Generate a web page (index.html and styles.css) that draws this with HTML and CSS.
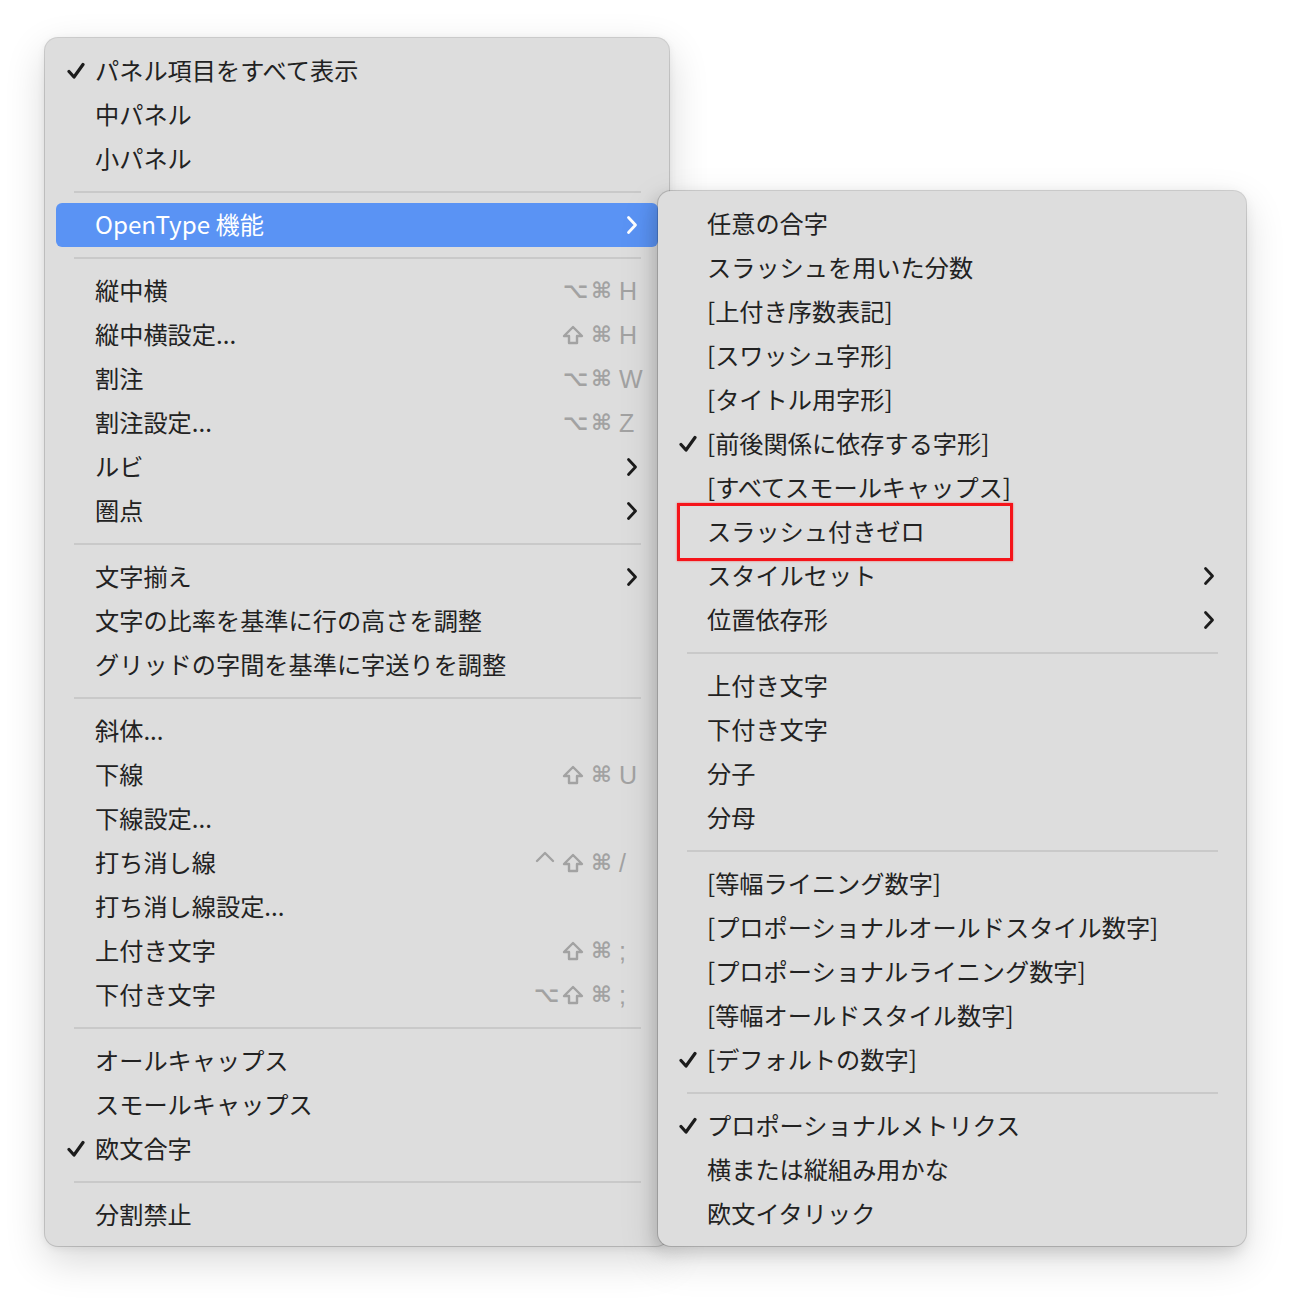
FILE: index.html
```html
<!DOCTYPE html>
<html lang="ja">
<head>
<meta charset="utf-8">
<link rel="stylesheet" href="styles.css">
</head>
<body>
<div class="stage">
  <div class="menu main">
    <div class="item"><span class="check"><svg viewBox="0 0 18 18"><path d="M2 9.5 L7 15 L16 2.5"/></svg></span><span class="label">パネル項目をすべて表示</span></div>
    <div class="item"><span class="check"></span><span class="label">中パネル</span></div>
    <div class="item"><span class="check"></span><span class="label">小パネル</span></div>
    <div class="sep"></div>
    <div class="item active"><span class="check"></span><span class="label">OpenType 機能</span><span class="chev"><svg viewBox="0 0 12 20"><path d="M2.5 2.5 L9.5 10 L2.5 17.5"/></svg></span></div>
    <div class="sep"></div>
    <div class="item"><span class="check"></span><span class="label">縦中横</span><span class="keys"><span class="k">⌥</span><span class="k">⌘</span><span class="l">H</span></span></div>
    <div class="item"><span class="check"></span><span class="label">縦中横設定...</span><span class="keys"><svg class="shift" viewBox="0 0 22 20"><path d="M11 2 L20 11 L15 11 L15 18 L7 18 L7 11 L2 11 Z"/></svg><span class="k">⌘</span><span class="l">H</span></span></div>
    <div class="item"><span class="check"></span><span class="label">割注</span><span class="keys"><span class="k">⌥</span><span class="k">⌘</span><span class="l">W</span></span></div>
    <div class="item"><span class="check"></span><span class="label">割注設定...</span><span class="keys"><span class="k">⌥</span><span class="k">⌘</span><span class="l">Z</span></span></div>
    <div class="item"><span class="check"></span><span class="label">ルビ</span><span class="chev"><svg viewBox="0 0 12 20"><path d="M2.5 2.5 L9.5 10 L2.5 17.5"/></svg></span></div>
    <div class="item"><span class="check"></span><span class="label">圏点</span><span class="chev"><svg viewBox="0 0 12 20"><path d="M2.5 2.5 L9.5 10 L2.5 17.5"/></svg></span></div>
    <div class="sep"></div>
    <div class="item"><span class="check"></span><span class="label">文字揃え</span><span class="chev"><svg viewBox="0 0 12 20"><path d="M2.5 2.5 L9.5 10 L2.5 17.5"/></svg></span></div>
    <div class="item"><span class="check"></span><span class="label">文字の比率を基準に行の高さを調整</span></div>
    <div class="item"><span class="check"></span><span class="label">グリッドの字間を基準に字送りを調整</span></div>
    <div class="sep"></div>
    <div class="item"><span class="check"></span><span class="label">斜体...</span></div>
    <div class="item"><span class="check"></span><span class="label">下線</span><span class="keys"><svg class="shift" viewBox="0 0 22 20"><path d="M11 2 L20 11 L15 11 L15 18 L7 18 L7 11 L2 11 Z"/></svg><span class="k">⌘</span><span class="l">U</span></span></div>
    <div class="item"><span class="check"></span><span class="label">下線設定...</span></div>
    <div class="item"><span class="check"></span><span class="label">打ち消し線</span><span class="keys"><svg class="ctrl" viewBox="0 0 20 20"><path d="M2 12 L10 4 L18 12"/></svg><svg class="shift" viewBox="0 0 22 20"><path d="M11 2 L20 11 L15 11 L15 18 L7 18 L7 11 L2 11 Z"/></svg><span class="k">⌘</span><span class="l">/</span></span></div>
    <div class="item"><span class="check"></span><span class="label">打ち消し線設定...</span></div>
    <div class="item"><span class="check"></span><span class="label">上付き文字</span><span class="keys"><svg class="shift" viewBox="0 0 22 20"><path d="M11 2 L20 11 L15 11 L15 18 L7 18 L7 11 L2 11 Z"/></svg><span class="k">⌘</span><span class="l">;</span></span></div>
    <div class="item"><span class="check"></span><span class="label">下付き文字</span><span class="keys"><span class="k">⌥</span><svg class="shift" viewBox="0 0 22 20"><path d="M11 2 L20 11 L15 11 L15 18 L7 18 L7 11 L2 11 Z"/></svg><span class="k">⌘</span><span class="l">;</span></span></div>
    <div class="sep"></div>
    <div class="item"><span class="check"></span><span class="label">オールキャップス</span></div>
    <div class="item"><span class="check"></span><span class="label">スモールキャップス</span></div>
    <div class="item"><span class="check"><svg viewBox="0 0 18 18"><path d="M2 9.5 L7 15 L16 2.5"/></svg></span><span class="label">欧文合字</span></div>
    <div class="sep"></div>
    <div class="item"><span class="check"></span><span class="label">分割禁止</span></div>
  </div>

  <div class="menu sub">
    <div class="item"><span class="check"></span><span class="label">任意の合字</span></div>
    <div class="item"><span class="check"></span><span class="label">スラッシュを用いた分数</span></div>
    <div class="item"><span class="check"></span><span class="label">[上付き序数表記]</span></div>
    <div class="item"><span class="check"></span><span class="label">[スワッシュ字形]</span></div>
    <div class="item"><span class="check"></span><span class="label">[タイトル用字形]</span></div>
    <div class="item"><span class="check"><svg viewBox="0 0 18 18"><path d="M2 9.5 L7 15 L16 2.5"/></svg></span><span class="label">[前後関係に依存する字形]</span></div>
    <div class="item"><span class="check"></span><span class="label">[すべてスモールキャップス]</span></div>
    <div class="item marked"><span class="check"></span><span class="label">スラッシュ付きゼロ</span><span class="redbox"></span></div>
    <div class="item"><span class="check"></span><span class="label">スタイルセット</span><span class="chev"><svg viewBox="0 0 12 20"><path d="M2.5 2.5 L9.5 10 L2.5 17.5"/></svg></span></div>
    <div class="item"><span class="check"></span><span class="label">位置依存形</span><span class="chev"><svg viewBox="0 0 12 20"><path d="M2.5 2.5 L9.5 10 L2.5 17.5"/></svg></span></div>
    <div class="sep"></div>
    <div class="item"><span class="check"></span><span class="label">上付き文字</span></div>
    <div class="item"><span class="check"></span><span class="label">下付き文字</span></div>
    <div class="item"><span class="check"></span><span class="label">分子</span></div>
    <div class="item"><span class="check"></span><span class="label">分母</span></div>
    <div class="sep"></div>
    <div class="item"><span class="check"></span><span class="label">[等幅ライニング数字]</span></div>
    <div class="item"><span class="check"></span><span class="label">[プロポーショナルオールドスタイル数字]</span></div>
    <div class="item"><span class="check"></span><span class="label">[プロポーショナルライニング数字]</span></div>
    <div class="item"><span class="check"></span><span class="label">[等幅オールドスタイル数字]</span></div>
    <div class="item"><span class="check"><svg viewBox="0 0 18 18"><path d="M2 9.5 L7 15 L16 2.5"/></svg></span><span class="label">[デフォルトの数字]</span></div>
    <div class="sep"></div>
    <div class="item"><span class="check"><svg viewBox="0 0 18 18"><path d="M2 9.5 L7 15 L16 2.5"/></svg></span><span class="label">プロポーショナルメトリクス</span></div>
    <div class="item"><span class="check"></span><span class="label">横または縦組み用かな</span></div>
    <div class="item"><span class="check"></span><span class="label">欧文イタリック</span></div>
  </div>
</div>
</body>
</html>
```

FILE: styles.css
```css
html, body {
  margin: 0;
  padding: 0;
  background: #ffffff;
}

body {
  font-family: "Noto Sans CJK JP", "Noto Sans", sans-serif;
  color: #222222;
  min-height: 1300px;
}

.stage {
  display: flex;
  align-items: flex-start;
  padding: 38px 0 54px 45px;
}

.menu {
  box-sizing: border-box;
  background: #dddddd;
  border-radius: 13px;
  box-shadow: 0 0 0 1px rgba(0, 0, 0, 0.16), 0 14px 40px rgba(0, 0, 0, 0.16), 0 2px 8px rgba(0, 0, 0, 0.08);
  padding: 11px 11px 9px 11px;
  display: flex;
  flex-direction: column;
}

.main {
  width: 624px;
  height: 1208px;
}

.sub {
  position: relative;
  width: 588px;
  height: 1055px;
  margin-left: -11px;
  margin-top: 153px;
  box-shadow: 0 0 0 1px rgba(0, 0, 0, 0.16), -4px 6px 16px rgba(0, 0, 0, 0.14), 0 14px 40px rgba(0, 0, 0, 0.14);
}

.item {
  position: relative;
  height: 44px;
  display: flex;
  align-items: center;
  padding: 0 20px 0 11px;
  border-radius: 6px;
  font-size: 24.2px;
  line-height: 44px;
  white-space: nowrap;
}

.item .label {
  position: relative;
  top: -1px;
}

.sub .item {
  padding-left: 10px;
}

.check {
  width: 28px;
  flex: 0 0 28px;
  display: flex;
  align-items: center;
}

.check svg {
  width: 18px;
  height: 18px;
  fill: none;
  stroke: #1c1c1c;
  stroke-width: 3.2;
  stroke-linecap: round;
  stroke-linejoin: round;
}

.label {
  flex: 1 1 auto;
}

.active {
  background: #5a93f4;
  color: #ffffff;
}

.active .chev svg {
  stroke: #ffffff;
}

.chev {
  display: flex;
  align-items: center;
}

.chev svg {
  width: 12px;
  height: 20px;
  fill: none;
  stroke: #1c1c1c;
  stroke-width: 2.8;
  stroke-linecap: round;
  stroke-linejoin: round;
}

.keys {
  display: flex;
  align-items: center;
  gap: 7px;
  color: #a2a2a2;
}

.keys .k {
  font-family: "DejaVu Sans", sans-serif;
  font-weight: bold;
  font-size: 22px;
  line-height: 44px;
  width: 21px;
  text-align: center;
}

.keys .l {
  font-family: "Liberation Sans", "Noto Sans", sans-serif;
  font-size: 25px;
  line-height: 44px;
  width: 19px;
  text-align: left;
}

.keys svg {
  fill: none;
  stroke: #a2a2a2;
  stroke-width: 2.4;
  stroke-linejoin: round;
  stroke-linecap: round;
}

.keys .shift {
  width: 22px;
  height: 20px;
}

.keys .ctrl {
  width: 20px;
  height: 20px;
  margin-top: -8px;
}

.sep {
  height: 22px;
  display: flex;
  align-items: center;
  padding: 0 17px 0 18px;
}

.sep::before {
  content: "";
  flex: 1;
  height: 2px;
  background: #c9c9c9;
}

.redbox {
  position: absolute;
  left: 8px;
  top: -7px;
  width: 336px;
  height: 58px;
  box-sizing: border-box;
  border: 3px solid #f5141a;
  box-shadow: 0 0 2px rgba(255, 0, 0, 0.5);
}
```
